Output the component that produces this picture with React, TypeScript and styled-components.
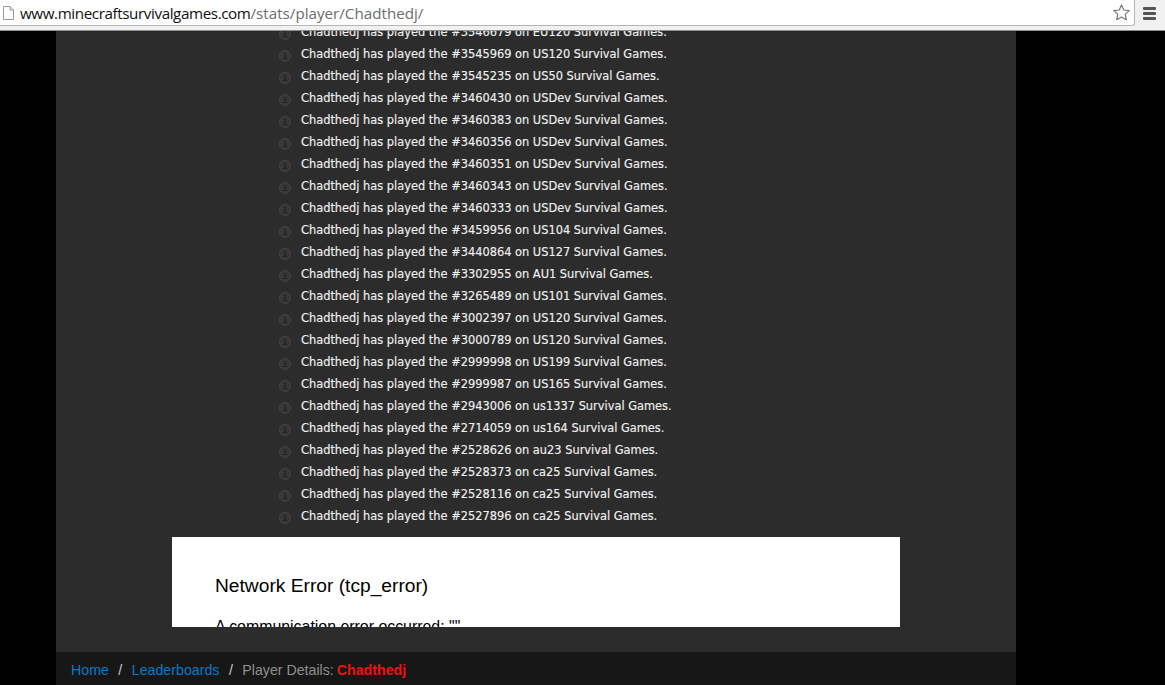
import React from "react";
import styled, { createGlobalStyle } from "styled-components";

const GlobalStyle = createGlobalStyle`
	html, body {
		margin: 0;
		height: 100%;
		background: #000;
	}
	#root {
		height: 100%;
	}
`;

const Page = styled.div`
	display: flex;
	flex-direction: column;
	height: 685px;
	overflow: hidden;
	background: #000;
`;

const Toolbar = styled.header`
	display: flex;
	align-items: center;
	flex: none;
	box-sizing: border-box;
	height: 31px;
	padding-bottom: 4px;
	background: #f1f1f1;
	border-bottom: 1px solid #8e8e8e;
`;

const Omnibox = styled.div`
	display: flex;
	align-items: center;
	flex: 1;
	box-sizing: border-box;
	height: 26px;
	padding-left: 3px;
	background: #fff;
	border-right: 1px solid #b5b5b5;
	border-bottom: 1px solid #b5b5b5;
	border-bottom-right-radius: 3px;
`;

const Url = styled.div`
	flex: 1;
	margin-left: 6px;
	font: 15.2px "Open Sans", "Noto Sans", sans-serif;
	color: #6d6d6d;
	white-space: nowrap;

	b {
		font-weight: 400;
		letter-spacing: -0.4px;
		color: #111;
	}
`;

const StarButton = styled.svg`
	width: 19px;
	height: 19px;
	margin-right: 3px;
`;

const MenuButton = styled.div`
	display: flex;
	flex-direction: column;
	justify-content: center;
	gap: 2px;
	flex: none;
	box-sizing: border-box;
	width: 30px;
	height: 26px;
	padding: 0 9px 0 8px;

	span {
		height: 3px;
		border-radius: 1px;
		background: #555;
	}
`;

const Panel = styled.div`
	display: flex;
	flex-direction: column;
	flex: 1;
	min-height: 0;
	width: 960px;
	margin-left: 56px;
	background: #2c2c2c;
`;

const Content = styled.main`
	flex: 1;
	min-height: 0;
	overflow: hidden;
`;

const Activity = styled.ul`
	margin: -10px 0 10px;
	padding: 0 0 0 223px;
	list-style: none;
`;

const ActivityRow = styled.li`
	display: flex;
	align-items: center;
	gap: 10px;
	box-sizing: border-box;
	height: 22px;
	padding-top: 1px;
	font: 11.4px/21px "DejaVu Sans", Verdana, sans-serif;
	color: #f0f0f0;
	-webkit-text-stroke: 0.15px #f0f0f0;
	white-space: nowrap;
`;

const RowIcon = styled.svg`
	flex: none;
	width: 12px;
	height: 12px;
	margin-top: 2px;
`;

const ErrorBox = styled.section`
	box-sizing: border-box;
	width: 728px;
	height: 90px;
	margin-left: 116px;
	padding-top: 37px;
	padding-left: 43px;
	overflow: hidden;
	background: #fff;
	color: #000;
	font-family: "Liberation Sans", Arial, sans-serif;

	h2 {
		margin: 0 0 19px;
		font-size: 19.2px;
		line-height: 24px;
		font-weight: 400;
	}

	p {
		margin: 0;
		font-size: 15.9px;
		line-height: 20px;
	}
`;

const Breadcrumb = styled.nav`
	display: flex;
	align-items: center;
	flex: none;
	box-sizing: border-box;
	height: 33px;
	padding: 2px 0 0 15px;
	background: #171717;
	font: 14.2px "Liberation Sans", Arial, sans-serif;
	color: #8f8f8f;
	white-space: nowrap;
`;

const CrumbLink = styled.a`
	color: #0a7ac9;
	text-decoration: none;
`;

const Slash = styled.span`
	margin: 0 9.500px;
	color: #ccc;
`;

const PlayerName = styled.strong`
	margin-left: 3px;
	color: #ef1111;
`;

const games: [string, string][] = [
	["3546679", "EU120"],
	["3545969", "US120"],
	["3545235", "US50"],
	["3460430", "USDev"],
	["3460383", "USDev"],
	["3460356", "USDev"],
	["3460351", "USDev"],
	["3460343", "USDev"],
	["3460333", "USDev"],
	["3459956", "US104"],
	["3440864", "US127"],
	["3302955", "AU1"],
	["3265489", "US101"],
	["3002397", "US120"],
	["3000789", "US120"],
	["2999998", "US199"],
	["2999987", "US165"],
	["2943006", "us1337"],
	["2714059", "us164"],
	["2528626", "au23"],
	["2528373", "ca25"],
	["2528116", "ca25"],
	["2527896", "ca25"],
];

const App = () => (
	<Page>
		<GlobalStyle />
		<Toolbar>
			<Omnibox>
				<svg width="11" height="14" viewBox="0 0 11 14">
					<path d="M.5.5h6.500l3.500 3.500v9.500h-10z M7 .5v3.500h3.500" fill="#fff" stroke="#9a9a9a" />
				</svg>
				<Url>
					<b>www.minecraftsurvivalgames.com</b>/stats/player/Chadthedj/
				</Url>
				<StarButton viewBox="0 0 24 24">
					<path
						d="M12 2.500l2.900 6.300 6.900.8-5.100 4.700 1.400 6.800-6.100-3.400-6.100 3.400 1.400-6.800-5.100-4.700 6.900-.8z"
						fill="#fff"
						stroke="#777"
						strokeWidth="1.500"
						strokeLinejoin="round"
					/>
				</StarButton>
			</Omnibox>
			<MenuButton>
				<span />
				<span />
				<span />
			</MenuButton>
		</Toolbar>
		<Panel>
			<Content>
				<Activity>
					{games.map(([id, server]) => (
						<ActivityRow key={id}>
							<RowIcon viewBox="0 0 12 12">
								<circle cx="6" cy="6" r="5.500" fill="#363636" stroke="#444" />
								<circle cx="6" cy="3.500" r="1" fill="#242424" />
								<rect x="5" y="5" width="2" height="2.500" fill="#242424" />
								<rect x="3.500" y="8" width="5" height="1" fill="#242424" />
							</RowIcon>
							Chadthedj has played the #{id} on {server} Survival Games.
						</ActivityRow>
					))}
				</Activity>
				<ErrorBox>
					<h2>Network Error (tcp_error)</h2>
					<p>A communication error occurred: ""</p>
				</ErrorBox>
			</Content>
			<Breadcrumb>
				<CrumbLink href="#">Home</CrumbLink>
				<Slash>/</Slash>
				<CrumbLink href="#">Leaderboards</CrumbLink>
				<Slash>/</Slash>
				Player Details:
				<PlayerName>Chadthedj</PlayerName>
			</Breadcrumb>
		</Panel>
	</Page>
);

export default App;
